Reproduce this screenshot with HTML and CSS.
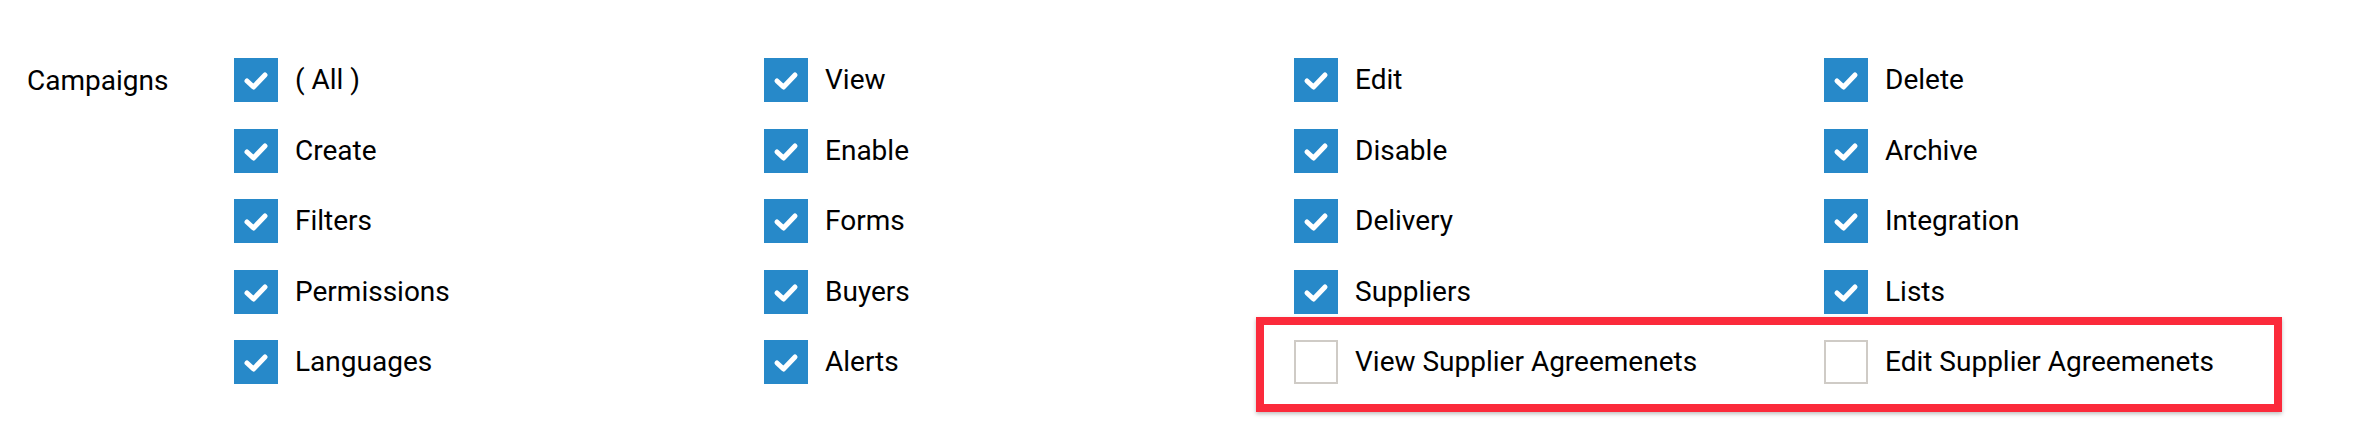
FILE: index.html
```html
<!DOCTYPE html>
<html>
  <head>
    <title>Permissions</title>
    <link rel="stylesheet" href="styles.css">
  </head>
  <body>
    <div class="perm-row">
      <div class="perm-name">Campaigns</div>
      <div class="perm-grid">
        <label class="opt"><span class="box on"><svg viewBox="0 0 44 44"><polyline points="13,23 19.5,29 31,17"/></svg></span>( All )</label>
        <label class="opt"><span class="box on"><svg viewBox="0 0 44 44"><polyline points="13,23 19.5,29 31,17"/></svg></span>View</label>
        <label class="opt"><span class="box on"><svg viewBox="0 0 44 44"><polyline points="13,23 19.5,29 31,17"/></svg></span>Edit</label>
        <label class="opt"><span class="box on"><svg viewBox="0 0 44 44"><polyline points="13,23 19.5,29 31,17"/></svg></span>Delete</label>

        <label class="opt"><span class="box on"><svg viewBox="0 0 44 44"><polyline points="13,23 19.5,29 31,17"/></svg></span>Create</label>
        <label class="opt"><span class="box on"><svg viewBox="0 0 44 44"><polyline points="13,23 19.5,29 31,17"/></svg></span>Enable</label>
        <label class="opt"><span class="box on"><svg viewBox="0 0 44 44"><polyline points="13,23 19.5,29 31,17"/></svg></span>Disable</label>
        <label class="opt"><span class="box on"><svg viewBox="0 0 44 44"><polyline points="13,23 19.5,29 31,17"/></svg></span>Archive</label>

        <label class="opt"><span class="box on"><svg viewBox="0 0 44 44"><polyline points="13,23 19.5,29 31,17"/></svg></span>Filters</label>
        <label class="opt"><span class="box on"><svg viewBox="0 0 44 44"><polyline points="13,23 19.5,29 31,17"/></svg></span>Forms</label>
        <label class="opt"><span class="box on"><svg viewBox="0 0 44 44"><polyline points="13,23 19.5,29 31,17"/></svg></span>Delivery</label>
        <label class="opt"><span class="box on"><svg viewBox="0 0 44 44"><polyline points="13,23 19.5,29 31,17"/></svg></span>Integration</label>

        <label class="opt"><span class="box on"><svg viewBox="0 0 44 44"><polyline points="13,23 19.5,29 31,17"/></svg></span>Permissions</label>
        <label class="opt"><span class="box on"><svg viewBox="0 0 44 44"><polyline points="13,23 19.5,29 31,17"/></svg></span>Buyers</label>
        <label class="opt"><span class="box on"><svg viewBox="0 0 44 44"><polyline points="13,23 19.5,29 31,17"/></svg></span>Suppliers</label>
        <label class="opt"><span class="box on"><svg viewBox="0 0 44 44"><polyline points="13,23 19.5,29 31,17"/></svg></span>Lists</label>

        <label class="opt"><span class="box on"><svg viewBox="0 0 44 44"><polyline points="13,23 19.5,29 31,17"/></svg></span>Languages</label>
        <label class="opt"><span class="box on"><svg viewBox="0 0 44 44"><polyline points="13,23 19.5,29 31,17"/></svg></span>Alerts</label>
        <div class="highlight">
          <div class="pair">
            <label class="opt"><span class="box"></span>View Supplier Agreemenets</label>
            <label class="opt"><span class="box"></span>Edit Supplier Agreemenets</label>
          </div>
          <span class="mark"></span>
        </div>
      </div>
    </div>
  </body>
</html>
```
FILE: styles.css
```css
/* Permission matrix */
html, body { min-height: 432px; }
body { margin: 0; background: #fff; color: #000; font: 28px Roboto, "Liberation Sans", Arial, sans-serif; }
.perm-row { display: flex; padding: 58px 0 48px 27px; }
.perm-name { width: 207px; padding-top: 6px; line-height: 33px; }
.perm-grid { display: grid; grid-template-columns: repeat(4, 530px); row-gap: 26.5px; }
.opt { display: flex; align-items: center; gap: 17px; height: 44px; line-height: 1; }
.box { width: 44px; height: 44px; box-sizing: border-box; border: 2px solid #cfcbc6; background: #fff; flex: none; }
.box.on { border: 0; background: #2789c9; }
.box svg { display: block; width: 44px; height: 44px; }
.box polyline { fill: none; stroke: #fff; stroke-width: 5; stroke-linecap: round; stroke-linejoin: round; }
.highlight { grid-column: 3 / 5; position: relative; height: 44px; }
.pair { display: grid; grid-template-columns: repeat(2, 530px); }
.mark { position: absolute; top: -23px; left: -38px; width: 1026px; height: 95px; box-sizing: border-box; border: 8px solid #fb2a3b; box-shadow: 0 2px 4px rgba(0, 0, 0, .25); pointer-events: none; }
```
